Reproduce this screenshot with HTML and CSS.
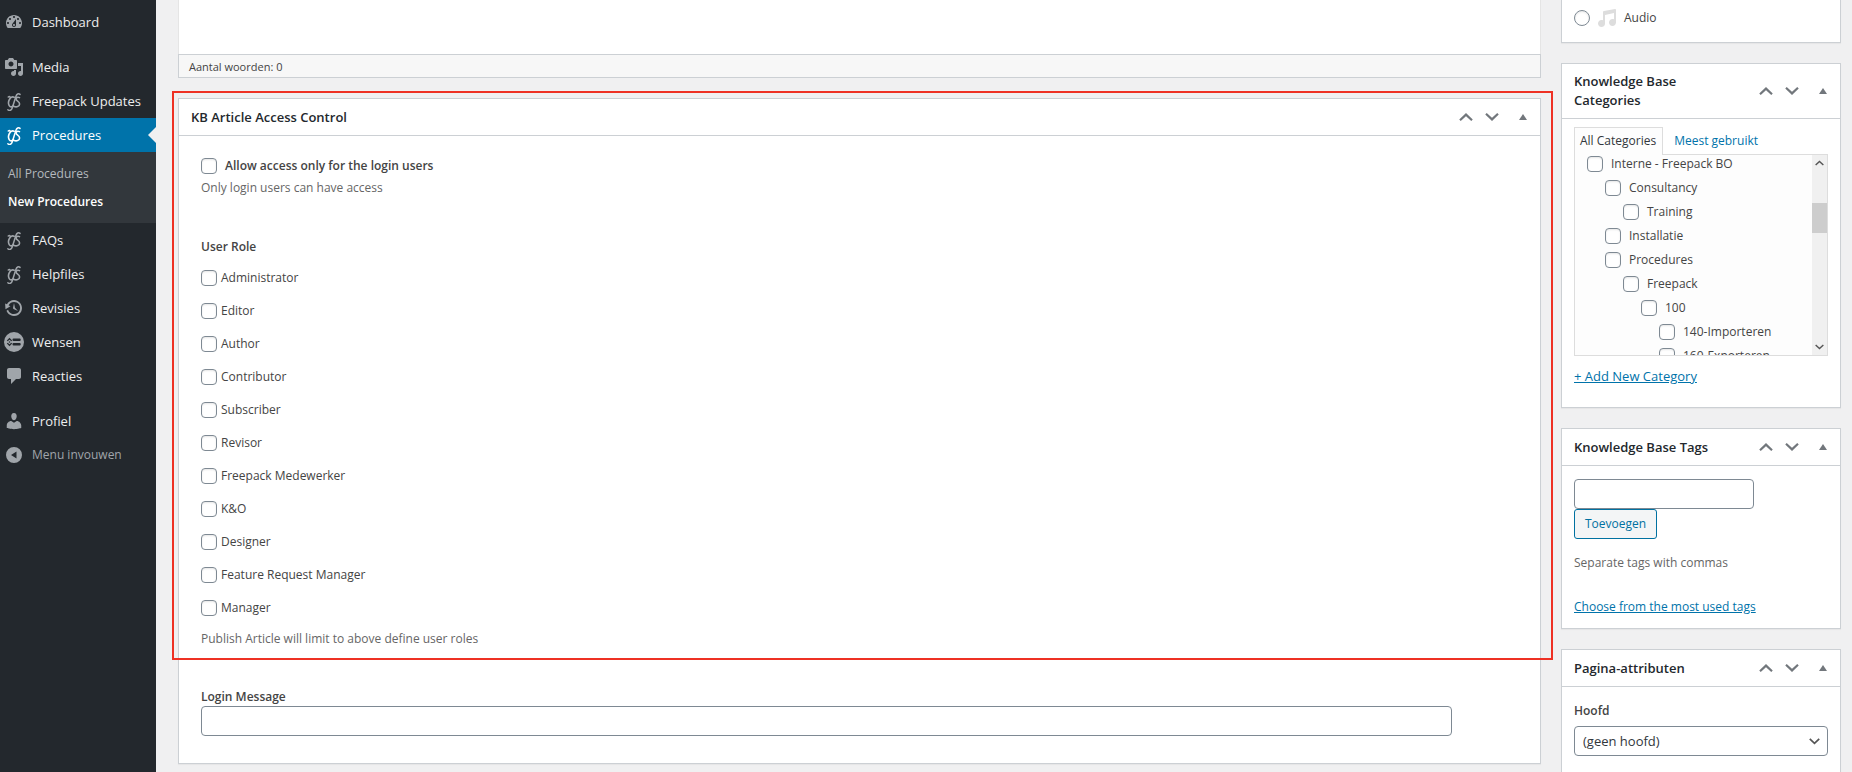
FILE: index.html
```html
<!DOCTYPE html>
<html lang="nl">
<head>
<meta charset="utf-8">
<title>New Procedures</title>
<link rel="stylesheet" href="styles.css">
</head>
<body>
<svg class="sprite" aria-hidden="true">
  <symbol id="i-dashboard" viewBox="0 0 20 20"><path fill-rule="evenodd" d="M3.76 16h12.48c1.1-1.37 1.76-3.11 1.76-5 0-4.42-3.58-8-8-8s-8 3.58-8 8c0 1.89.66 3.63 1.76 5zM10 4c.55 0 1 .45 1 1s-.45 1-1 1-1-.45-1-1 .45-1 1-1zM6 6c.55 0 1 .45 1 1s-.45 1-1 1-1-.45-1-1 .45-1 1-1zm8 0c.55 0 1 .45 1 1s-.45 1-1 1-1-.45-1-1 .45-1 1-1zm-5.37 5.55L12 7v6c0 1.1-.9 2-2 2s-2-.9-2-2c0-.57.24-1.08.63-1.45zM4 10c.55 0 1 .45 1 1s-.45 1-1 1-1-.45-1-1 .45-1 1-1zm12 0c.55 0 1 .45 1 1s-.45 1-1 1-1-.45-1-1 .45-1 1-1zm-5 3c0-.55-.45-1-1-1s-1 .45-1 1 .45 1 1 1 1-.45 1-1z"/></symbol>
  <symbol id="i-media" viewBox="0 0 20 20"><path fill-rule="evenodd" d="M13 11V4c0-.55-.45-1-1-1h-1.67L9 1H5L3.67 3H2c-.55 0-1 .45-1 1v7c0 .55.45 1 1 1h10c.55 0 1-.45 1-1zM7 4.5c1.38 0 2.5 1.12 2.5 2.5S8.38 9.5 7 9.5 4.5 8.38 4.5 7 5.62 4.5 7 4.5zM14 6h5v10.5c0 1.38-1.12 2.5-2.5 2.5S14 17.88 14 16.5s1.12-2.5 2.5-2.5c.17 0 .34.02.5.05V9h-3V6zm-4 8.05V13h2v3.5c0 1.38-1.12 2.5-2.5 2.5S7 17.88 7 16.5 8.12 14 9.5 14c.17 0 .34.02.5.05z"/></symbol>
  <symbol id="i-script" viewBox="0 -1 20 20"><g fill="none" stroke="currentColor" stroke-linecap="round"><path stroke-width="1.500" d="M16 2.400C14.600 1 12.700 2 11.900 4.400L8.200 16C7.500 18.300 5.500 19.200 3.900 17.700"/><path stroke-width="1.600" d="M4.300 5C5.400 4 6.600 4.500 6.200 6.200C4.700 8.300 4 11.500 5.200 13.600C6.200 15.300 8.300 15.200 9.300 13.700M6.200 6.200C7.200 5 8.800 4.600 10.200 5.200"/><path stroke-width="1.600" d="M15.500 5.600C13.500 4.600 11.600 5.800 12.200 7.600C12.700 9.200 15.600 9.400 15.600 12C15.600 14.700 12.300 15.500 9.600 14.200"/></g></symbol>
  <symbol id="i-backup" viewBox="0 0 20 20"><path d="M13.650 2.880c3.930 2.010 5.480 6.840 3.470 10.770s-6.830 5.480-10.770 3.470c-1.870-.96-3.200-2.560-3.860-4.400l1.640-1.030c.45 1.570 1.520 2.950 3.080 3.760 3.010 1.540 6.690.35 8.230-2.660 1.550-3.010.36-6.690-2.650-8.240C9.780 3.010 6.100 4.200 4.560 7.210l1.880.97-4.950 3.080-.39-5.820 1.780.91C4.900 2.400 9.750.89 13.650 2.880zm-4.360 7.830C9.110 10.530 9 10.280 9 10c0-.07.03-.12.04-.19h-.01L10 5l.97 4.810L14 13l-4.500-2.120.02-.02c-.08-.04-.16-.09-.23-.15z"/></symbol>
  <symbol id="i-wish" viewBox="0 0 20 20"><circle cx="10" cy="10" r="10"/><g fill="#23282d"><rect x="8.500" y="6.500" width="8.200" height="2.500" rx="1"/><rect x="8.500" y="11" width="8.200" height="2.500" rx="1"/></g><path fill="none" stroke="#23282d" stroke-width="1.300" d="M3.300 8.900 5.500 6.700 7.700 8.900M3.300 11.100 5.500 13.300 7.700 11.100"/><circle cx="5.500" cy="10" r=".8" fill="#23282d"/></symbol>
  <symbol id="i-comment" viewBox="0 0 20 20"><path d="M5 2h10c1.100 0 2 .9 2 2v7c0 1.100-.9 2-2 2h-3l-5 5v-5H5c-1.100 0-2-.9-2-2V4c0-1.100.9-2 2-2z"/></symbol>
  <symbol id="i-user" viewBox="0 0 20 20"><path d="M10 9.250c-2.270 0-2.730-3.440-2.730-3.440C7 4.020 7.820 2 9.970 2c2.160 0 2.980 2.020 2.710 3.810 0 0-.41 3.440-2.680 3.440zm0 2.570L12.720 10c2.390 0 4.520 2.330 4.520 4.530v2.490s-3.650 1.130-7.240 1.130c-3.650 0-7.240-1.130-7.240-1.130v-2.490c0-2.250 1.940-4.480 4.470-4.480z"/></symbol>
  <symbol id="i-collapse" viewBox="0 0 20 20"><path fill-rule="evenodd" d="M10 2a8 8 0 1 1 0 16 8 8 0 0 1 0-16zM12.500 6.500v7L7 10z"/></symbol>
  <symbol id="i-audio" viewBox="0 0 20 20"><path d="M6.990 3.080l11.020-2c.55-.08.99.45.99 1V14.500c0 1.940-1.570 3.500-3.500 3.500S12 16.440 12 14.500c0-1.930 1.570-3.500 3.500-3.500.54 0 1.040.14 1.500.35V5.080l-9 2V16c-.24 1.700-1.740 3-3.500 3C2.570 19 1 17.440 1 15.500 1 13.570 2.570 12 4.500 12c.54 0 1.040.14 1.500.35V4.080c0-.55.44-.91.99-1z"/></symbol>
  <symbol id="i-up" viewBox="0 0 14 8"><path fill="none" stroke="currentColor" stroke-width="2.200" d="M1 7.200 7 1.600l6 5.600"/></symbol>
  <symbol id="i-down" viewBox="0 0 14 8"><path fill="none" stroke="currentColor" stroke-width="2.200" d="M1 .8 7 6.400 13 .8"/></symbol>
  <symbol id="i-tri" viewBox="0 0 8 6"><path d="M4 0 8 6H0z"/></symbol>
</svg>

<div class="app">
  <nav class="menu">
    <a class="menu-item" href="#"><svg><use href="#i-dashboard"/></svg>Dashboard</a>
    <div class="menu-gap"></div>
    <a class="menu-item" href="#"><svg><use href="#i-media"/></svg>Media</a>
    <a class="menu-item" href="#"><svg><use href="#i-script"/></svg>Freepack Updates</a>
    <a class="menu-item current" href="#"><svg><use href="#i-script"/></svg>Procedures</a>
    <div class="submenu">
      <a href="#">All Procedures</a>
      <a class="active" href="#">New Procedures</a>
    </div>
    <a class="menu-item" href="#"><svg><use href="#i-script"/></svg>FAQs</a>
    <a class="menu-item" href="#"><svg><use href="#i-script"/></svg>Helpfiles</a>
    <a class="menu-item" href="#"><svg><use href="#i-backup"/></svg>Revisies</a>
    <a class="menu-item" href="#"><svg><use href="#i-wish"/></svg>Wensen</a>
    <a class="menu-item" href="#"><svg><use href="#i-comment"/></svg>Reacties</a>
    <div class="menu-gap"></div>
    <a class="menu-item" href="#"><svg><use href="#i-user"/></svg>Profiel</a>
    <button class="menu-item collapse" type="button"><svg><use href="#i-collapse"/></svg>Menu invouwen</button>
  </nav>

  <main class="content">
    <div class="primary">
      <div class="editor">
        <div class="editor-area"></div>
        <div class="editor-status">Aantal woorden: 0</div>
      </div>

      <section class="box access">
        <div class="highlight"></div>
        <header class="box-head">
          <h2>KB Article Access Control</h2>
          <div class="box-actions">
            <button type="button" aria-label="Omhoog"><svg class="chev"><use href="#i-up"/></svg></button>
            <button type="button" aria-label="Omlaag"><svg class="chev"><use href="#i-down"/></svg></button>
            <button type="button" aria-label="Inklappen"><svg class="tri"><use href="#i-tri"/></svg></button>
          </div>
        </header>
        <div class="access-body">
          <label class="check allow"><input type="checkbox">Allow access only for the login users</label>
          <p class="help">Only login users can have access</p>
          <h3 class="group-title">User Role</h3>
          <div class="roles">
            <label class="check"><input type="checkbox"><span>Administrator</span></label>
            <label class="check"><input type="checkbox"><span>Editor</span></label>
            <label class="check"><input type="checkbox"><span>Author</span></label>
            <label class="check"><input type="checkbox"><span>Contributor</span></label>
            <label class="check"><input type="checkbox"><span>Subscriber</span></label>
            <label class="check"><input type="checkbox"><span>Revisor</span></label>
            <label class="check"><input type="checkbox"><span>Freepack Medewerker</span></label>
            <label class="check"><input type="checkbox"><span>K&amp;O</span></label>
            <label class="check"><input type="checkbox"><span>Designer</span></label>
            <label class="check"><input type="checkbox"><span>Feature Request Manager</span></label>
            <label class="check"><input type="checkbox"><span>Manager</span></label>
          </div>
          <p class="help">Publish Article will limit to above define user roles</p>
          <label class="field-label" for="login-message">Login Message</label>
          <input class="text-field message" id="login-message" type="text">
        </div>
      </section>
    </div>

    <aside class="secondary">
      <section class="box format">
        <label class="format-row"><input type="radio" name="format"><svg class="audio"><use href="#i-audio"/></svg>Audio</label>
      </section>

      <section class="box">
        <header class="box-head">
          <h2>Knowledge Base Categories</h2>
          <div class="box-actions">
            <button type="button" aria-label="Omhoog"><svg class="chev"><use href="#i-up"/></svg></button>
            <button type="button" aria-label="Omlaag"><svg class="chev"><use href="#i-down"/></svg></button>
            <button type="button" aria-label="Inklappen"><svg class="tri"><use href="#i-tri"/></svg></button>
          </div>
        </header>
        <div class="categories">
          <div class="tabs">
            <a class="tab selected" href="#">All Categories</a>
            <a class="tab" href="#">Meest gebruikt</a>
          </div>
          <div class="cat-panel">
            <div class="cat-list">
              <label class="cat"><input type="checkbox">Interne - Freepack BO</label>
              <label class="cat level-1"><input type="checkbox">Consultancy</label>
              <label class="cat level-2"><input type="checkbox">Training</label>
              <label class="cat level-1"><input type="checkbox">Installatie</label>
              <label class="cat level-1"><input type="checkbox">Procedures</label>
              <label class="cat level-2"><input type="checkbox">Freepack</label>
              <label class="cat level-3"><input type="checkbox">100</label>
              <label class="cat level-4"><input type="checkbox">140-Importeren</label>
              <label class="cat level-4"><input type="checkbox">160-Exporteren</label>
            </div>
            <div class="scrollbar">
              <svg><use href="#i-up"/></svg>
              <div class="thumb"></div>
              <svg><use href="#i-down"/></svg>
            </div>
          </div>
          <a class="link add-link" href="#">+ Add New Category</a>
        </div>
      </section>

      <section class="box">
        <header class="box-head">
          <h2>Knowledge Base Tags</h2>
          <div class="box-actions">
            <button type="button" aria-label="Omhoog"><svg class="chev"><use href="#i-up"/></svg></button>
            <button type="button" aria-label="Omlaag"><svg class="chev"><use href="#i-down"/></svg></button>
            <button type="button" aria-label="Inklappen"><svg class="tri"><use href="#i-tri"/></svg></button>
          </div>
        </header>
        <div class="tags">
          <input class="text-field tag-input" type="text" aria-label="Knowledge Base Tags">
          <button class="button" type="button">Toevoegen</button>
          <p class="help">Separate tags with commas</p>
          <a class="link" href="#">Choose from the most used tags</a>
        </div>
      </section>

      <section class="box">
        <header class="box-head">
          <h2>Pagina-attributen</h2>
          <div class="box-actions">
            <button type="button" aria-label="Omhoog"><svg class="chev"><use href="#i-up"/></svg></button>
            <button type="button" aria-label="Omlaag"><svg class="chev"><use href="#i-down"/></svg></button>
            <button type="button" aria-label="Inklappen"><svg class="tri"><use href="#i-tri"/></svg></button>
          </div>
        </header>
        <div class="attributes">
          <label class="field-label" for="parent">Hoofd</label>
          <div class="select-wrap">
            <select id="parent"><option>(geen hoofd)</option></select>
            <svg><use href="#i-down"/></svg>
          </div>
        </div>
      </section>
    </aside>
  </main>
</div>
</body>
</html>
```

FILE: styles.css
```css
* { box-sizing: border-box; }

html, body { height: 100%; }

body {
  margin: 0;
  overflow: hidden;
  background: #f0f0f1;
  color: #444;
  font: 12px/20px "Open Sans", "Noto Sans", sans-serif;
}

h2, h3, p { margin: 0; }

button, input, select { margin: 0; font: inherit; }

svg { flex: none; fill: currentColor; }

.sprite { position: absolute; width: 0; height: 0; }

.app { display: flex; min-height: 100%; }

/* Admin menu */
.menu {
  flex: none;
  width: 156px;
  padding-top: 5px;
  background: #23282d;
}

.menu-item {
  display: flex;
  align-items: center;
  gap: 8px;
  width: 100%;
  height: 34px;
  padding: 0 4px;
  border: 0;
  background: none;
  color: #eee;
  font-size: 13px;
  font-weight: 500;
  text-decoration: none;
  white-space: nowrap;
}

.menu-item svg { width: 20px; height: 20px; color: #a0a5aa; }

.menu-item.current {
  position: relative;
  background: #0073aa;
  color: #fff;
}

.menu-item.current svg { color: #fff; }

.menu-item.current::after {
  content: "";
  position: absolute;
  top: 9px;
  right: 0;
  border: 8px solid transparent;
  border-left: 0;
  border-right-color: #f0f0f1;
}

.menu-item.collapse { color: #a0a5aa; font-size: 12px; font-weight: 400; }

.menu-gap { height: 11px; }

.submenu {
  display: grid;
  gap: 8px;
  padding: 12px 8px 11px;
  background: #32373c;
}

.submenu a { color: #b4b9be; text-decoration: none; }

.submenu .active { color: #fff; font-weight: 600; }

/* Columns */
.content {
  display: flex;
  flex: 1;
  align-items: flex-start;
  gap: 20px;
  min-width: 0;
  padding: 0 11px 0 22px;
}

.primary { flex: 1; min-width: 0; }

.secondary { display: grid; flex: none; gap: 20px; width: 280px; }

.editor { margin-bottom: 20px; }

.editor-area {
  height: 54px;
  border: solid #e5e5e5;
  border-width: 0 1px;
  background: #fff;
}

.editor-status {
  height: 24px;
  padding: 2px 10px;
  border: 1px solid #ccd0d4;
  background: #f7f7f7;
  font-size: 11px;
}

/* Boxes */
.box {
  border: 1px solid #ccd0d4;
  background: #fff;
  box-shadow: 0 1px 1px rgba(0, 0, 0, .04);
}

.box-head {
  display: flex;
  align-items: center;
  justify-content: space-between;
  padding: 8px 13px 8px 12px;
  border-bottom: 1px solid #ccd0d4;
}

.box-head h2 {
  flex: 1;
  max-width: 170px;
  color: #23282d;
  font-size: 13px;
  font-weight: 600;
  line-height: 19px;
}

.box-actions { display: flex; }

.box-actions button {
  display: grid;
  place-items: center;
  width: 26px;
  height: 20px;
  padding: 0;
  border: 0;
  background: none;
  color: #72777c;
}

.box-actions button:last-child { width: 22px; place-items: center end; }

.chev { width: 14px; height: 8px; }

.tri { width: 8px; height: 6px; }

.help { color: #666; }

.link { color: #0073aa; text-decoration: underline; }

input[type="checkbox"], input[type="radio"] {
  flex: none;
  appearance: none;
  width: 16px;
  height: 16px;
  border: 1px solid #7e8993;
  border-radius: 4px;
  background: #fff;
  box-shadow: inset 0 1px 2px rgba(0, 0, 0, .1);
}

input[type="radio"] { border-radius: 50%; }

.text-field, select {
  display: block;
  height: 30px;
  padding: 0 8px;
  border: 1px solid #7e8993;
  border-radius: 4px;
  background: #fff;
  color: #32373c;
}

.field-label { display: block; font-weight: 600; }

/* Access control */
.access { position: relative; }

.access .box-head h2 { max-width: none; }

.highlight {
  position: absolute;
  inset: -8px -13px 103px -7px;
  border: 2px solid #ee3124;
  pointer-events: none;
}

.access-body { padding: 20px 22px 27px; }

.check { display: flex; gap: 4px; }

.allow { align-items: center; gap: 8px; margin-bottom: 2px; font-weight: 600; }

.group-title {
  margin: 39px 0 11px;
  font-size: 12px;
  font-weight: 600;
}

.roles { display: grid; gap: 13px; margin-bottom: 11px; }

.roles .check { align-items: center; height: 20px; }

.access-body .field-label { margin-top: 39px; line-height: 18px; }

.message { width: 95%; }

/* Format */
.format { padding: 8px 12px 14px; border-top: 0; }

.format-row { display: flex; align-items: center; gap: 7px; }

.audio { width: 20px; height: 20px; color: #ddd; }

/* Categories */
.categories { padding: 8px 12px 20px; }

.tabs { display: flex; }

.tab {
  height: 28px;
  padding: 3px 6px 3px 5px;
  border: 1px solid transparent;
  color: #0073aa;
  text-decoration: none;
}

.tab.selected {
  z-index: 1;
  margin: 0 5px -1px 0;
  border-color: #ddd;
  border-bottom: 0;
  background: #fdfdfd;
  color: #32373c;
}

.cat-panel {
  display: flex;
  height: 202px;
  margin-top: -1px;
  overflow: hidden;
  border: 1px solid #ddd;
  background: #fdfdfd;
}

.cat-list { flex: 1; padding-left: 12px; margin-top: -3px; }

.cat { display: flex; align-items: center; gap: 8px; height: 24px; }

.level-1 { margin-left: 18px; }
.level-2 { margin-left: 36px; }
.level-3 { margin-left: 54px; }
.level-4 { margin-left: 72px; }

.scrollbar {
  display: grid;
  grid-template-rows: auto 1fr auto;
  justify-items: center;
  width: 15px;
  padding: 5px 0;
  background: #f0f0f0;
  color: #555;
}

.scrollbar svg { width: 9px; height: 6px; }

.thumb { width: 15px; height: 30px; margin-top: 37px; background: #cdcdcd; }

.add-link { display: inline-block; margin-top: 10px; font-size: 13px; font-weight: 500; }

/* Tags */
.tags { padding: 13px 12px 11px; }

.tag-input { width: 180px; }

.button {
  height: 30px;
  padding: 0 10px;
  border: 1px solid #0071a1;
  border-radius: 3px;
  background: #f3f5f6;
  color: #0071a1;
}

.tags .help { margin: 14px 0 24px; }

/* Attributes */
.attributes { padding: 14px 12px 40px; }

.select-wrap { position: relative; margin-top: 5px; }

select { width: 100%; appearance: none; font-size: 13px; }

.select-wrap svg {
  position: absolute;
  top: 12px;
  right: 8px;
  width: 11px;
  height: 7px;
  color: #555;
  pointer-events: none;
}
```
